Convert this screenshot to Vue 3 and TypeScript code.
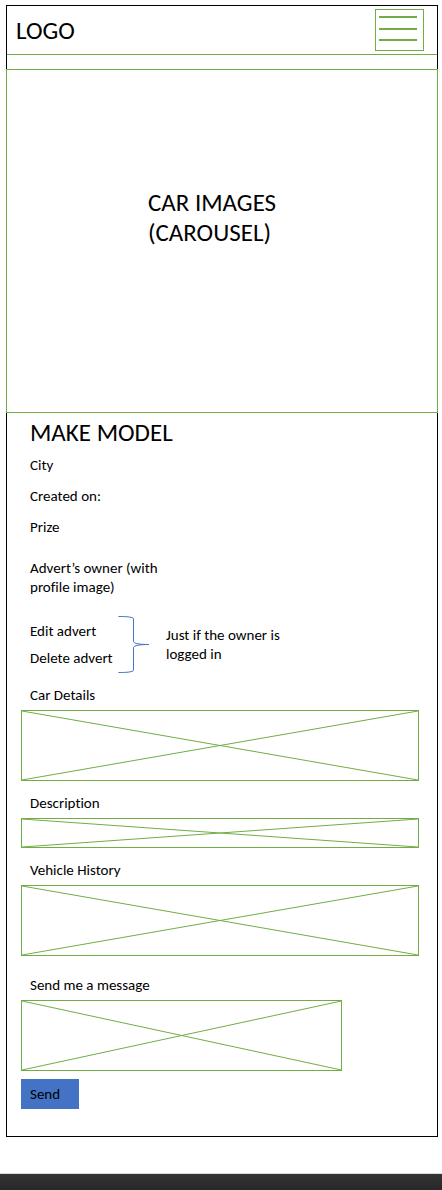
<script setup lang="ts">
import { ref } from 'vue'

interface Section {
  title: string
  size: 'tall' | 'short'
}

const facts: string[] = ['City', 'Created on:', 'Prize']
const sections: Section[] = [
  { title: 'Car Details', size: 'tall' },
  { title: 'Description', size: 'short' },
  { title: 'Vehicle History', size: 'tall' },
]
const message = ref('')
</script>

<template>
  <div class="page">
    <div class="frame">
      <header class="header">
        <span class="logo">LOGO</span>
        <button class="menu" type="button" aria-label="Menu">
          <svg width="38" height="25" viewBox="0 0 38 25" aria-hidden="true">
            <path d="M0 1H38M0 13H38M0 24H38" stroke="#70ad47" stroke-width="2" />
          </svg>
        </button>
      </header>

      <section class="carousel">
        <p class="carousel-text">CAR IMAGES<br />(CAROUSEL)</p>
      </section>

      <main class="details">
        <h1 class="title">MAKE MODEL</h1>
        <ul class="facts">
          <li v-for="fact in facts" :key="fact">{{ fact }}</li>
        </ul>
        <p class="owner">Advert’s owner (with<br />profile image)</p>

        <div class="owner-tools">
          <nav class="links">
            <a href="#edit">Edit advert</a>
            <a href="#delete">Delete advert</a>
          </nav>
          <svg class="brace" width="32" height="57" viewBox="0 0 32 57" aria-hidden="true">
            <path
              d="M0.5 0.5C9 0.5 15.5 1 15.5 3V25.5C15.5 27.5 22 28.5 31 28.5C22 28.5 15.5 29.5 15.5 31.5V54C15.5 56 9 56.5 0.5 56.5"
              fill="none"
              stroke="#4472c4"
            />
          </svg>
          <p class="note">Just if the owner is<br />logged in</p>
        </div>

        <section v-for="section in sections" :key="section.title" class="block">
          <h2 class="label">{{ section.title }}</h2>
          <div class="box" :class="section.size">
            <svg class="cross" viewBox="0 0 100 100" preserveAspectRatio="none" aria-hidden="true">
              <path d="M0 0L100 100M0 100L100 0" />
            </svg>
          </div>
        </section>

        <form class="message" @submit.prevent>
          <label class="label" for="message">Send me a message</label>
          <div class="box tall message-box">
            <svg class="cross" viewBox="0 0 100 100" preserveAspectRatio="none" aria-hidden="true">
              <path d="M0 0L100 100M0 100L100 0" />
            </svg>
            <textarea id="message" v-model="message"></textarea>
          </div>
          <button class="send" type="submit">Send</button>
        </form>
      </main>
    </div>
    <footer class="bar"></footer>
  </div>
</template>

<style>
body {
  margin: 0;
  background: #fff;
}
</style>

<style scoped>
.page {
  padding-top: 5px;
  font-family: Carlito, Lato, "Open Sans", sans-serif;
  font-size: 15px;
  font-variant-ligatures: none;
  line-height: 19px;
  color: #000;
}
.page * {
  box-sizing: border-box;
}
.frame {
  margin: 0 4px 36px 6px;
  border: 1px solid #000;
}
.header {
  display: flex;
  justify-content: space-between;
  align-items: flex-start;
  padding: 3px 13px 3px 9px;
  border-bottom: 1px solid #70ad47;
}
.logo {
  padding-top: 7px;
  font-size: 25px;
  line-height: 30px;
}
.menu {
  display: flex;
  width: 49px;
  height: 42px;
  padding: 6px 3px;
  border: 1px solid #70ad47;
  background: none;
}
.carousel {
  display: flex;
  align-items: center;
  justify-content: center;
  height: 344px;
  margin: 14px -1px 0;
  padding: 0 20px 46px 0;
  border: 1px solid #70ad47;
}
.carousel-text {
  margin: 0;
  font-size: 25px;
  line-height: 30px;
}
.details {
  padding: 5px 18px 27px 14px;
}
.title {
  margin: 0;
  padding-left: 9px;
  font-size: 25px;
  font-weight: 400;
  line-height: 30px;
}
.facts {
  display: flex;
  flex-direction: column;
  gap: 12px;
  margin: 8px 0 0;
  padding: 0 0 0 9px;
  list-style: none;
}
.owner {
  margin: 22px 0 0;
  padding-left: 9px;
}
.owner-tools {
  display: flex;
  align-items: center;
  margin-top: 19px;
  padding-left: 9px;
}
.links {
  display: flex;
  flex-direction: column;
  gap: 8px;
  width: 88px;
  white-space: nowrap;
}
.links a {
  color: inherit;
  text-decoration: none;
}
.brace {
  flex: none;
}
.note {
  margin: 0 0 0 16px;
}
.block {
  margin-top: 13px;
}
.label {
  display: block;
  margin: 0 0 5px;
  padding-left: 9px;
  font-size: 15px;
  font-weight: 400;
  line-height: 19px;
}
.box {
  position: relative;
  border: 1px solid #70ad47;
}
.tall {
  height: 71px;
}
.short {
  height: 30px;
}
.cross {
  display: block;
  width: 100%;
  height: 100%;
}
.cross path {
  fill: none;
  stroke: #70ad47;
  stroke-width: 1px;
  vector-effect: non-scaling-stroke;
}
.message {
  margin-top: 20px;
}
.message-box {
  width: calc(81% - 1px);
}
.message-box textarea {
  position: absolute;
  inset: 0;
  width: 100%;
  height: 100%;
  padding: 8px;
  border: 0;
  background: transparent;
  font: inherit;
  resize: none;
}
.send {
  display: block;
  margin-top: 8px;
  padding: 0 19px 0 9px;
  border: 0;
  background: #4472c4;
  color: #000;
  font: inherit;
  line-height: 30px;
}
.bar {
  height: 17px;
  border-top: 1px solid #d9d9d9;
  background: linear-gradient(#343434, #282828);
}
</style>
